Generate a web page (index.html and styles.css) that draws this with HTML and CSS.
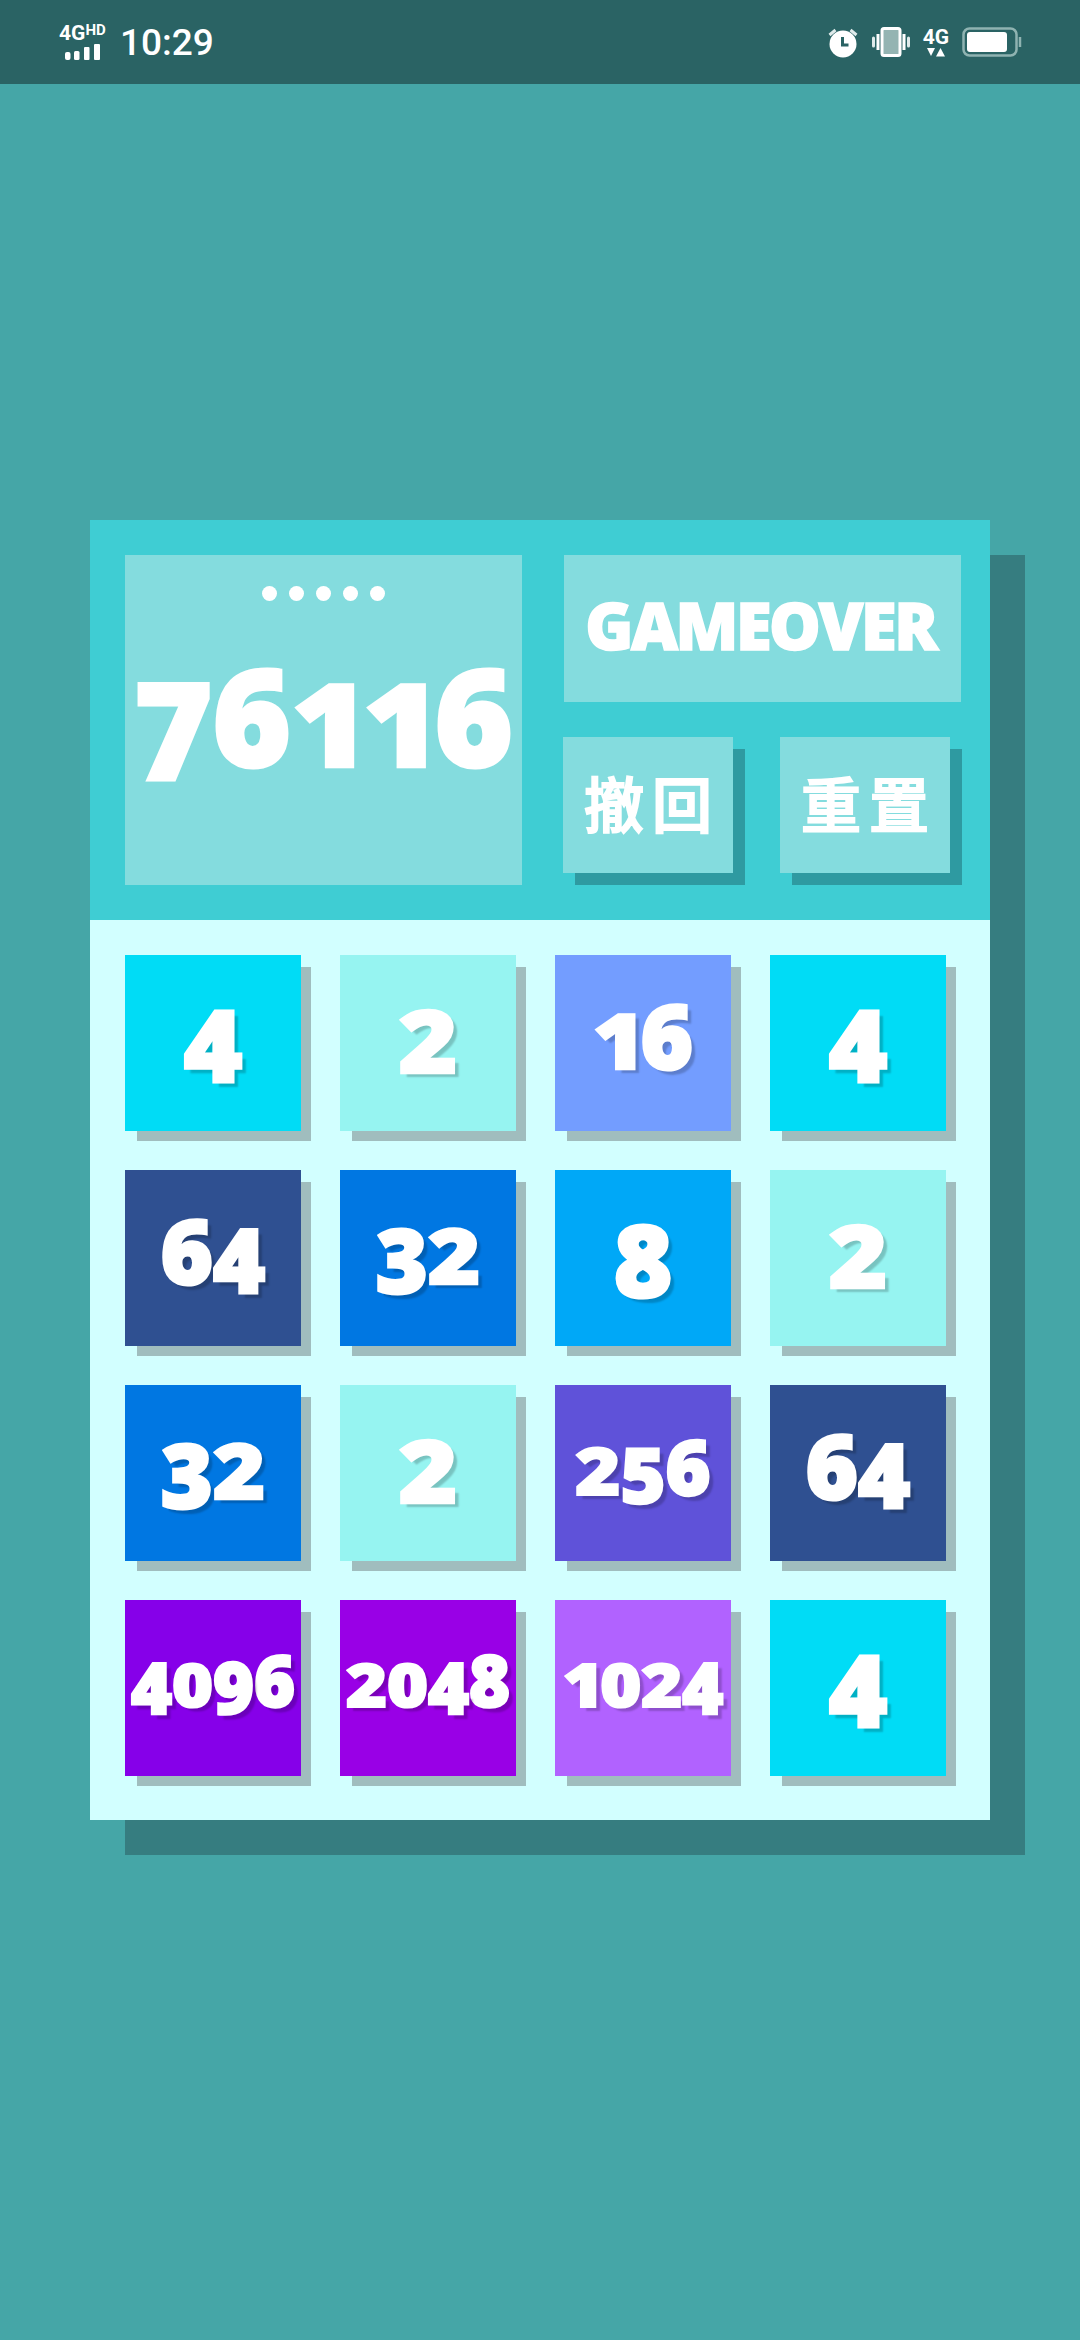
FILE: index.html
```html
<!DOCTYPE html>
<html lang="zh">
<head>
<meta charset="utf-8">
<title>2048</title>
<link rel="stylesheet" href="styles.css">
</head>
<body>
<header class="status">
  <div class="status-left">
    <div class="net">
      <div class="net-text"><span class="net-g">4G</span><span class="net-hd">HD</span></div>
      <svg class="signal" width="36" height="16" viewBox="0 0 36 16" fill="#fff"><rect x="0" y="8" width="5.500" height="8" rx="2"/><rect x="9" y="7" width="5.500" height="9" rx="1.500"/><rect x="19" y="3" width="5.500" height="13" rx="1"/><rect x="29" y="0" width="6" height="16" rx="1"/></svg>
    </div>
    <span class="time">10:29</span>
  </div>
  <div class="status-right">
    <svg width="32" height="31" viewBox="0 0 31 31" fill="none"><path d="M2 8 8 3M29 8 23 3" stroke="#dfeaea" stroke-width="3"/><circle cx="15.500" cy="17" r="13.500" fill="#fff"/><path d="M15 10v8h6" stroke="#2a6364" stroke-width="3" fill="none"/></svg>
    <svg class="vib" width="38" height="30" viewBox="0 0 38 30" fill="none"><rect x="10" y="1.500" width="18" height="27" rx="2" stroke="#fff" stroke-width="3" fill="#94b4b2"/><path d="M6 7v16M32 7v16" stroke="#fff" stroke-width="3"/><path d="M1.500 11v8M36.500 11v8" stroke="#dfeaea" stroke-width="3" stroke-linecap="round"/></svg>
    <div class="net-r"><span class="net-g">4G</span><svg width="18" height="9" viewBox="0 0 18 9" fill="#fff"><path d="M0 0h8L4 8zM13.500 0 18 8.500H9z"/></svg></div>
    <svg class="batt" width="60" height="30" viewBox="0 0 60 30" fill="none"><rect x="1.500" y="1.500" width="53" height="27" rx="6" stroke="#8fb3b1" stroke-width="2.500"/><rect x="5" y="5" width="40" height="20" rx="3" fill="#fff"/><path d="M58 10v10" stroke="#8fb3b1" stroke-width="2.500"/></svg>
  </div>
</header>

<main class="panel">
  <section class="top">
    <div class="score">
      <div class="dots"><i></i><i></i><i></i><i></i><i></i></div>
      <div class="score-num"><span class="d l">7</span><span class="d">6</span><span class="d s n">1</span><span class="d s n">1</span><span class="d">6</span></div>
    </div>
    <div class="side">
      <div class="over">GAMEOVER</div>
      <div class="btns">
        <button class="btn">撤回</button>
        <button class="btn">重置</button>
      </div>
    </div>
  </section>
  <section class="board">
    <div class="tile t4"><span class="d">4</span></div>
    <div class="tile t2"><span class="d s">2</span></div>
    <div class="tile t16 n2"><span class="d s n">1</span><span class="d">6</span></div>
    <div class="tile t4"><span class="d">4</span></div>
    <div class="tile t64 n2"><span class="d">6</span><span class="d l">4</span></div>
    <div class="tile t32 n2"><span class="d l">3</span><span class="d s">2</span></div>
    <div class="tile t8"><span class="d">8</span></div>
    <div class="tile t2"><span class="d s">2</span></div>
    <div class="tile t32 n2"><span class="d l">3</span><span class="d s">2</span></div>
    <div class="tile t2"><span class="d s">2</span></div>
    <div class="tile t256 n3"><span class="d s">2</span><span class="d l">5</span><span class="d">6</span></div>
    <div class="tile t64 n2"><span class="d">6</span><span class="d l">4</span></div>
    <div class="tile t4096 n4"><span class="d l">4</span><span class="d s">0</span><span class="d l">9</span><span class="d">6</span></div>
    <div class="tile t2048 n4"><span class="d s">2</span><span class="d s">0</span><span class="d l">4</span><span class="d">8</span></div>
    <div class="tile t1024 n4"><span class="d s n">1</span><span class="d s">0</span><span class="d s">2</span><span class="d l">4</span></div>
    <div class="tile t4"><span class="d">4</span></div>
  </section>
</main>
</body>
</html>
```
FILE: styles.css
```css
* { box-sizing: border-box; }
html, body { margin: 0; height: 100%; }
body { width: 1080px; height: 2340px; background: #45a6a7; font-family: "Open Sans", "Noto Sans CJK SC", sans-serif; overflow: hidden; color: #fff; }

.status { height: 84px; background: #2a6364; display: flex; justify-content: space-between; align-items: center; padding: 0 58px 0 59px; }
.status-left { display: flex; align-items: center; gap: 11px; }
.net { width: 50px; display: flex; flex-direction: column; align-items: flex-start; gap: 0; }
.net-text { display: flex; align-items: flex-start; height: 21px; margin-top: -2px; font-family: Roboto, sans-serif; font-weight: 700; white-space: nowrap; }
.net-g { font-size: 21px; font-family: Roboto, sans-serif; font-weight: 700; line-height: 21px; }
.net-hd { font-size: 15px; line-height: 14px; margin-left: 0; }
.signal { margin-left: 6px; }
.time { font-family: Roboto, sans-serif; font-weight: 500; font-size: 37px; line-height: 40px; margin-top: 2px; }
.status-right { display: flex; align-items: center; gap: 13px; }
.net-r { display: flex; flex-direction: column; align-items: center; width: 26px; }

.panel { width: 900px; margin: 436px 0 0 90px; box-shadow: 35px 35px 0 #367d80; }
.top { height: 400px; background: #3fcdd3; padding: 35px 29px 35px 35px; display: flex; gap: 42px; }
.score { width: 397px; height: 330px; background: #84dcde; }
.dots { display: flex; justify-content: center; gap: 12px; padding-top: 31px; }
.dots i { width: 15px; height: 15px; border-radius: 50%; background: #fff; }
.score-num { display: flex; justify-content: center; font-size: 134px; line-height: 150px; font-weight: 800; margin-top: 39px; -webkit-text-stroke: 3px #fff; white-space: nowrap; }
.side { width: 397px; display: flex; flex-direction: column; gap: 35px; }
.over { height: 147px; background: #84dcde; display: flex; align-items: center; justify-content: center; padding: 0 4px 8px 0; font-size: 65px; font-weight: 800; letter-spacing: -2.500px; -webkit-text-stroke: 1.500px #fff; }
.btns { display: flex; margin-left: -1px; gap: 47px; }
.btn { width: 170px; height: 136px; border: 0; padding: 0 0 8px; background: #84dcde; color: #fff; box-shadow: 12px 12px 0 #2e9aa1; font-family: "Noto Sans CJK SC", sans-serif; font-weight: 500; font-size: 60px; letter-spacing: 8px; text-indent: 8px; -webkit-text-stroke: 2px #fff; }

.board { background: #d2ffff; padding: 35px 44px 42px 35px; display: grid; grid-template-columns: repeat(4, 176px); grid-auto-rows: 176px; gap: 39px; height: 900px; }
.tile { display: flex; align-items: center; justify-content: center; font-size: 100px; font-weight: 800; box-shadow: 11px 11px 0 -1px #a0bdbe; -webkit-text-stroke: 3px #fff; text-shadow: 5px 5px 2px rgba(0, 0, 0, .2); line-height: 1; }
.d { display: inline-block; transform-origin: 50% 86%; }
.s { transform: scaleY(.86); }
.l { transform: translateY(.1em); }
.n { letter-spacing: -.05em; }
.n2 { font-size: 89px; padding-bottom: .2em; }
.n3 { font-size: 77px; padding-bottom: .2em; -webkit-text-stroke-width: 2.500px; }
.n4 { font-size: 70px; padding-bottom: .22em; -webkit-text-stroke-width: 2.500px; }
.t2 { background: #96f4f1; padding-bottom: .18em; }
.t4 { background: #00dcf6; }
.t8 { background: #00a8f7; }
.t16 { background: #739dff; }
.t32 { background: #0077e2; }
.t64 { background: #2f5091; }
.t256 { background: #5f52d9; }
.t1024 { background: #b162ff; }
.t2048 { background: #9900e6; }
.t4096 { background: #8600e9; }
```
